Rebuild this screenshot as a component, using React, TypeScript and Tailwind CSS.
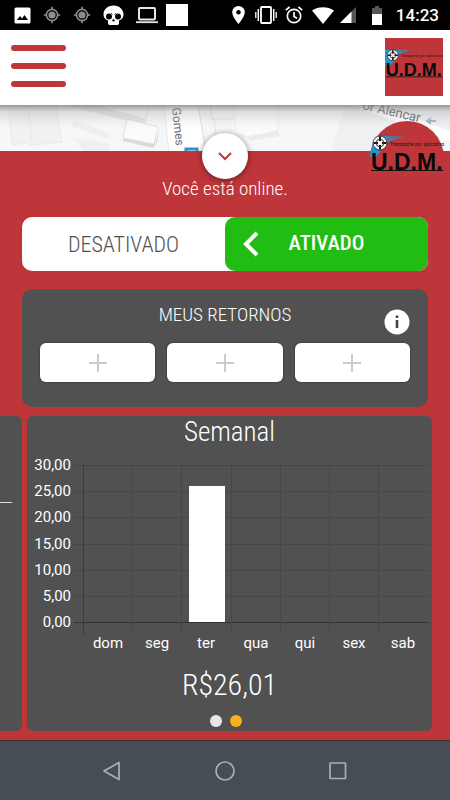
import React from "react";
import { clsx } from "clsx";

const condensed = "font-['Roboto_Condensed','Roboto',sans-serif]";

const days = [
  { name: "dom", value: 0 },
  { name: "seg", value: 0 },
  { name: "ter", value: 26.01 },
  { name: "qua", value: 0 },
  { name: "qui", value: 0 },
  { name: "sex", value: 0 },
  { name: "sab", value: 0 },
];
const ticks = ["30,00", "25,00", "20,00", "15,00", "10,00", "5,00", "0,00"];

function Crosshair() {
  return (
    <svg width="18" height="18" viewBox="0 0 18 18" fill="none" stroke="#8d8d8d">
      <circle cx="9" cy="9" r="5.6" strokeWidth="1.6" />
      <circle cx="9" cy="9" r="3.6" fill="#8d8d8d" stroke="none" />
      <path d="M9 .8v3M9 14.2v3M.8 9h3M14.2 9h3" strokeWidth="1.6" />
    </svg>
  );
}

function StatusBar() {
  return (
    <div className="flex h-[30px] items-center justify-between bg-black pr-[11px] pl-[14px] text-white">
      <div className="flex items-center gap-3">
        <svg width="17" height="17" viewBox="0 0 17 17">
          <rect x=".5" y=".5" width="16" height="16" rx="1.5" fill="#fff" />
          <path d="M3 13l3-4 2 2.4L10.5 8 14 13z" fill="#000" />
        </svg>
        <Crosshair />
        <Crosshair />
        <svg width="21" height="21" viewBox="0 0 21 21">
          <path d="M10.5.5C4.5.5.5 4.500.5 9.500c0 3 1.500 5 4.500 6v2.500c0 1.500 1 2 2 2h7c1 0 2-.5 2-2v-2.500c3-1 4.500-3 4.500-6 0-5-4-9-10-9z" fill="#fff" />
          <circle cx="6" cy="11.5" r="3" />
          <circle cx="15" cy="11.5" r="3" />
          <path d="M10.5 14l-1 2h2zM8 8l1.500 1.500M13 8l-1.500 1.500" stroke="#000" strokeWidth=".7" />
        </svg>
        <svg width="22" height="17" viewBox="0 0 22 17" fill="none" stroke="#e8e8e0">
          <rect x="3" y="1" width="16" height="11.5" rx="1" strokeWidth="2" />
          <path d="M0 15.200h22" strokeWidth="1.8" />
        </svg>
        <span className="-ml-1 size-[22px] bg-white" />
      </div>
      <div className="flex items-center">
        <svg width="13" height="18" viewBox="0 0 13 18">
          <path d="M6.500 0A6.300 6.300 0 0 0 .2 6.300C.2 11 6.500 18 6.500 18s6.300-7 6.300-11.700A6.300 6.300 0 0 0 6.500 0z" fill="#fff" />
          <circle cx="6.5" cy="6.3" r="2.2" />
        </svg>
        <svg className="ml-[10px]" width="22" height="18" viewBox="0 0 22 18" fill="none" stroke="#fff">
          <rect x="6" y="1" width="10" height="16" rx=".8" strokeWidth="1.8" />
          <path d="M3.300 3v12M18.700 3v12" strokeWidth="1.5" />
          <path d="M.8 6v6M21.200 6v6" strokeWidth="1.3" />
        </svg>
        <svg className="ml-[8px]" width="18" height="18" viewBox="0 0 18 18" fill="none" stroke="#fff" strokeWidth="1.7">
          <circle cx="9" cy="10" r="6.7" />
          <path d="M9 6v4.400l3 1.800M.8 4.200L4.600 1M17.200 4.200L13.400 1" />
        </svg>
        <svg className="ml-[9px]" width="22" height="17" viewBox="0 0 22 17">
          <path d="M0 3.500C6-1 16-1 22 3.500L11 17z" fill="#fff" />
        </svg>
        <svg className="ml-[6px]" width="16" height="16" viewBox="0 0 16 16">
          <path d="M0 16L16 0v16z" fill="#555" />
          <path d="M0 16L11.500 4.500V16z" fill="#fff" />
        </svg>
        <svg className="ml-[16px]" width="10" height="19" viewBox="0 0 10 19">
          <path d="M3 0h4v2h3v6H0V2h3z" fill="#555" />
          <path d="M0 8h10v11H0z" fill="#fff" />
        </svg>
        <span className="ml-[14px] font-['Roboto',sans-serif] text-[17px] leading-5 font-medium">14:23</span>
      </div>
    </div>
  );
}

function Logo({ round = false }: { round?: boolean }) {
  const id = round ? "glow-round" : "glow-square";
  return (
    <svg
      className={clsx("block", round ? "w-[76px]" : "w-[58px]")}
      viewBox={round ? "-1 -1 76 76" : "0 0 74 74"}
      role="img"
      aria-label="U.D.M. Transporte por aplicativo"
    >
      <defs>
        <linearGradient id={id}>
          <stop offset="0" stopColor="#2497d2" />
          <stop offset=".35" stopColor="#2f8fc4" />
          <stop offset="1" stopColor="#bf363a" />
        </linearGradient>
        <clipPath id={id + "-clip"}>
          {round ? <circle cx="37" cy="37" r="37" /> : <rect width="74" height="74" />}
        </clipPath>
      </defs>
      <g clipPath={"url(#" + id + "-clip)"}>
        <rect width="74" height="74" fill="#bf363a" />
        <path d="M0 15h38L18 21 6 36H0z" fill={"url(#" + id + ")"} />
      </g>
      <circle cx="10" cy="22" r="7" fill="#f2f2f2" stroke="#222" strokeWidth=".8" />
      <path d="M10 15.500v4.500M10 24v4.500M3.500 22h4.500M12 22h4.500" stroke="#111" strokeWidth="2" />
      <circle cx="10" cy="22" r="3.8" fill="none" stroke="#333" />
      <text x="20" y="24.5" fontSize="5.5" fill="#2a1515" fontFamily="Roboto Condensed, Roboto, sans-serif">
        Transporte por aplicativo
      </text>
      <text x="1" y="49" fontSize="23" fontWeight="700" fill="#0a0a0a" fontFamily="Liberation Sans, sans-serif">
        U.D.M.
      </text>
      <path d="M1 49.500h72" stroke="#111" strokeWidth="1" />
    </svg>
  );
}

function MapStrip() {
  return (
    <svg className="block h-[46px] w-full" viewBox="0 0 450 46" preserveAspectRatio="xMidYMid slice">
      <defs>
        <linearGradient id="shade" x2="0" y2="1">
          <stop offset="0" stopColor="#777" stopOpacity=".75" />
          <stop offset=".15" stopColor="#999" stopOpacity=".3" />
          <stop offset=".5" stopColor="#bbb" stopOpacity="0" />
        </linearGradient>
      </defs>
      <rect width="450" height="46" fill="#f6f7f8" />
      <path d="M8 0L12 40l14-2 6 2 30-3L56 0z" fill="#f0f1f3" stroke="#e8eaec" />
      <path d="M28 0l4 38" stroke="#e6e8ea" />
      <path d="M74 16l36 12-2 6-36-12zM74 33l26 4 10 2v7H84z" fill="#eeeff0" />
      <path d="M65 0h32l50 14-4 6z" fill="#e4e5e6" />
      <path d="M123 33l32 6 5-15-3 14-4 5-30-7z" fill="#d9dada" />
      <path d="M127 14l31 8-4 17-31-6z" fill="#fafbfa" stroke="#dfe1e0" />
      <path d="M148 0l-3 18M164 0l5 46" stroke="#e2e4e6" />
      <path d="M165 0h33l6 46h-35z" fill="#fff" />
      <path d="M198 0l8 46M210 0l2 14h22M214 14l4 30" stroke="#dfe1e4" fill="none" />
      <path d="M234 0h44v26l-30 6-12-4z" fill="#fafafa" stroke="#eceeee" />
      <path d="M278 26l2 5-30 5-2-5z" fill="#e9ebec" />
      <path d="M345 0l-14 46h95l24-20V0z" fill="#eff0f2" />
      <path d="M350 0l100 36v-10L380 0z" fill="#fff" />
      <path d="M186 46v-2h11v2" stroke="#2398c8" strokeWidth="3" fill="none" />
      <g fontFamily="Roboto, sans-serif" fontSize="12" fill="#666b70">
        <text transform="translate(172 3) rotate(84)">Gomes</text>
        <text transform="translate(362 4) rotate(13)" fontSize="13">or Alencar</text>
      </g>
      <path d="M436 16h-9m4-3l-4 3 4 3" stroke="#a9b0cf" strokeWidth="2" fill="none" />
      <rect width="450" height="46" fill="url(#shade)" />
    </svg>
  );
}

function WeeklyChart() {
  return (
    <svg className="block w-full" viewBox="0 0 405 204" role="img" aria-label="Ganhos por dia da semana">
      <g shapeRendering="crispEdges">
        {ticks.map((tick, i) => (
          <path key={tick} d={`M47 ${17 + Math.round(i * 26.17)}.5h355`} stroke={i === 6 ? "#333" : "#474747"} />
        ))}
        {days.map((day, i) => (
          <path key={day.name} d={`M${56 + Math.round(i * 49.2)}.5 17v170`} stroke={i === 0 ? "#3b3b3b" : "#474747"} />
        ))}
      </g>
      <g fill="#fff" fontFamily="Roboto, sans-serif" fontSize="15">
        {ticks.map((tick, i) => (
          <text key={tick} x="44" y={22 + Math.round(i * 26.17)} textAnchor="end">{tick}</text>
        ))}
        {days.map((day, i) => (
          <React.Fragment key={day.name}>
            <rect x={162 + (i - 2) * 49} y={174 - day.value * 5.23} width="36" height={day.value * 5.23} />
            <text x={81 + Math.round(i * 49.2)} y="200" textAnchor="middle">{day.name}</text>
          </React.Fragment>
        ))}
      </g>
    </svg>
  );
}

export default function App() {
  return (
    <div className={clsx("flex min-h-screen flex-col overflow-x-hidden bg-[#bf363a] text-white", condensed)}>
      <StatusBar />
      <header className="flex h-[75px] items-center justify-between bg-white pr-[7px] pb-px pl-[11px]">
        <button aria-label="Menu" className="flex w-[55px] flex-col gap-3 pb-0.5">
          <span className="h-[6px] w-full rounded-full bg-[#bf363a]" />
          <span className="h-[6px] w-full rounded-full bg-[#bf363a]" />
          <span className="h-[6px] w-full rounded-full bg-[#bf363a]" />
        </button>
        <Logo />
      </header>
      <div className="relative">
        <MapStrip />
        <button aria-label="Recolher" className="absolute top-[28px] left-1/2 flex size-[46px] -translate-x-1/2 items-center justify-center rounded-full bg-white shadow-[0_1px_6px_rgba(0,0,0,0.5)]">
          <svg width="14" height="10" viewBox="0 0 14 10" fill="none" stroke="#bf363a" strokeWidth="2">
            <path d="M1 2l6 6 6-6" />
          </svg>
        </button>
        <div className="absolute top-[15px] right-[5px]"><Logo round /></div>
      </div>
      <main className="flex-1">
        <p className="pt-[26px] text-center text-[19px] leading-6 font-light">Você está online.</p>
        <div className="mx-[22px] mt-4 flex h-[54px] rounded-[10px] bg-white text-[22px]">
          <button className="flex-1 font-light text-[#505050]">DESATIVADO</button>
          <button className="relative flex-1 rounded-[10px] bg-[#22bd13] text-[21px] font-medium">
            <svg className="absolute top-[14px] left-[18px]" width="16" height="26" viewBox="0 0 16 26" fill="none" stroke="#fff" strokeWidth="4">
              <path d="M14 2L3 13l11 11" />
            </svg>
            ATIVADO
          </button>
        </div>
        <section className="relative mx-[22px] mt-[18px] h-[118px] rounded-[10px] bg-[#515151] px-[18px] pt-[14px]">
          <h2 className="text-center text-[19px] leading-6 font-light">MEUS RETORNOS</h2>
          <button aria-label="Informações" className="absolute top-[20px] right-[18px]">
            <svg width="26" height="26" viewBox="0 0 26 26">
              <circle cx="13" cy="13" r="12.5" fill="#fff" />
              <path d="M11.700 6.500h2.600v2.600h-2.600zM11.700 11h2.600v8h-2.600z" fill="#444" />
            </svg>
          </button>
          <div className="mt-[16px] grid grid-cols-3 gap-3">
            {[1, 2, 3].map((slot) => (
              <button key={slot} aria-label={`Adicionar retorno ${slot}`} className="flex h-[39px] items-center justify-center rounded-md bg-white shadow-[0_0_2px_rgba(0,0,0,0.5)]">
                <svg width="18" height="18" viewBox="0 0 18 18" stroke="#ccc" strokeWidth="2"><path d="M9 0v18M0 9h18" /></svg>
              </button>
            ))}
          </div>
        </section>
        <div className="mt-[9px] flex gap-[5px] pr-[18px]">
          <div className="w-[22px] shrink-0 rounded-r-md bg-[#515151] pt-[86px]">
            <div className="h-px w-3 bg-[#ddd]" />
          </div>
          <section className="min-w-0 flex-1 rounded-md bg-[#515151] pb-1 text-center">
            <h2 className="text-[27px] leading-8 font-light">Semanal</h2>
            <WeeklyChart />
            <p className="mt-[15px] text-[30px] leading-9 font-light">R$26,01</p>
            <div className="mt-3 flex justify-center gap-2 pr-2">
              <button aria-label="Página 1" className="size-3 rounded-full bg-[#e6e6e6]" />
              <button aria-label="Página 2" className="size-3 rounded-full bg-[#fbae1c]" />
            </div>
          </section>
        </div>
      </main>
      <nav className="grid h-[60px] grid-cols-3 items-center border-t border-[#353035] bg-[#464d55] px-14">
        <button aria-label="Voltar" className="flex justify-center">
          <svg width="20" height="20" viewBox="0 0 20 20" fill="none" stroke="#aab0b5" strokeWidth="1.7" strokeLinejoin="round"><path d="M17 1.500v17L2 10z" /></svg>
        </button>
        <button aria-label="Início" className="flex justify-center">
          <svg width="20" height="20" viewBox="0 0 20 20" fill="none" stroke="#aab0b5" strokeWidth="1.7"><circle cx="10" cy="10" r="9" /></svg>
        </button>
        <button aria-label="Recentes" className="flex justify-center">
          <svg width="20" height="20" viewBox="0 0 20 20" fill="none" stroke="#aab0b5" strokeWidth="1.7"><rect x="2" y="2" width="15.5" height="15.5" rx=".5" /></svg>
        </button>
      </nav>
    </div>
  );
}
